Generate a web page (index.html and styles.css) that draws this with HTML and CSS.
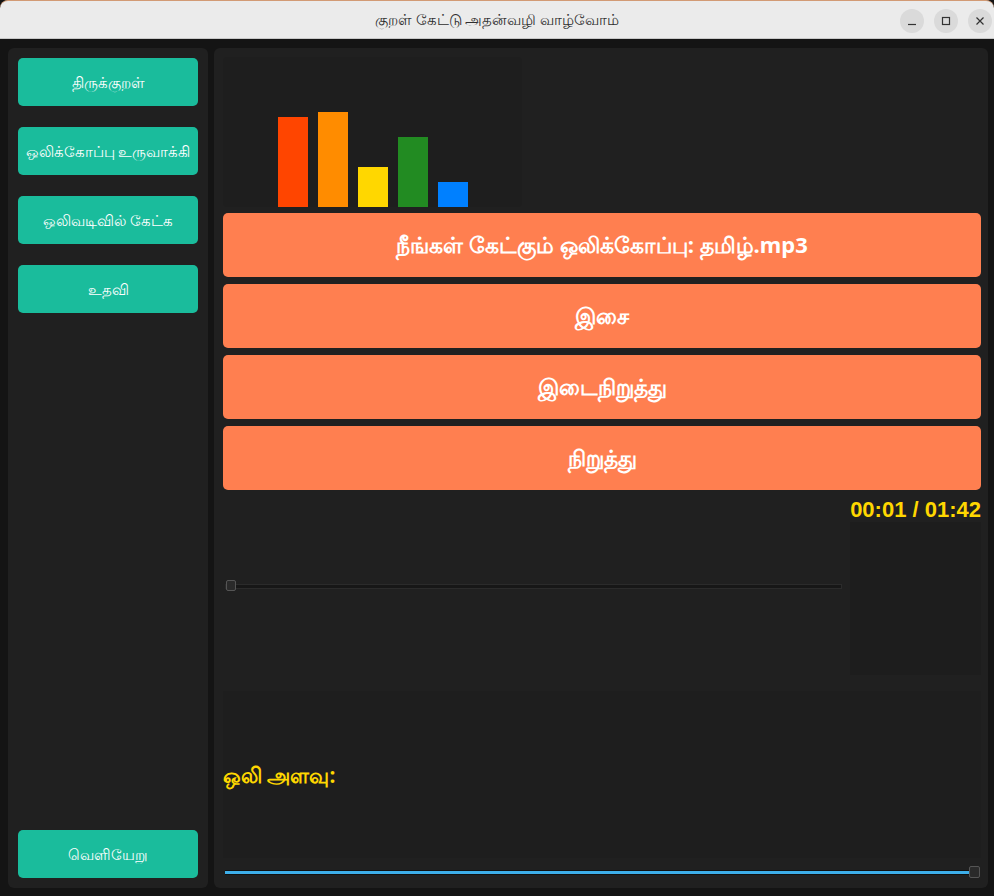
FILE: index.html
```html
<!DOCTYPE html>
<html lang="ta">
<head>
<meta charset="utf-8">
<title>குறள் கேட்டு அதன்வழி வாழ்வோம்</title>
<link rel="stylesheet" href="styles.css">
</head>
<body>
<div class="window">
  <header class="titlebar">
    <div class="title">குறள் கேட்டு அதன்வழி வாழ்வோம்</div>
    <div class="controls">
      <span class="ctl"><svg width="10" height="10" viewBox="0 0 10 10"><path d="M1 8.5h8" stroke="#333" stroke-width="1.2"/></svg></span>
      <span class="ctl"><svg width="10" height="10" viewBox="0 0 10 10"><rect x="1.5" y="1.5" width="7" height="7" fill="none" stroke="#333" stroke-width="1.2"/></svg></span>
      <span class="ctl"><svg width="10" height="10" viewBox="0 0 10 10"><path d="M1.5 1.5l7 7M8.5 1.5l-7 7" stroke="#333" stroke-width="1.2"/></svg></span>
    </div>
  </header>
  <div class="app">
    <nav class="sidebar">
      <button class="nav-btn">திருக்குறள்</button>
      <button class="nav-btn">ஒலிக்கோப்பு உருவாக்கி</button>
      <button class="nav-btn">ஒலிவடிவில் கேட்க</button>
      <button class="nav-btn">உதவி</button>
      <button class="nav-btn exit">வெளியேறு</button>
    </nav>
    <main class="main">
      <div class="visualizer">
        <div class="bar" style="height:90px;background:#ff4500"></div>
        <div class="bar" style="height:95px;background:#ff8c00"></div>
        <div class="bar" style="height:40px;background:#ffd700"></div>
        <div class="bar" style="height:70px;background:#228b22"></div>
        <div class="bar" style="height:25px;background:#0080ff"></div>
      </div>
      <button class="action">நீங்கள் கேட்கும் ஒலிக்கோப்பு: தமிழ்.mp3</button>
      <button class="action">இசை</button>
      <button class="action">இடைநிறுத்து</button>
      <button class="action">நிறுத்து</button>
      <div class="progress">
        <div class="progress-slider">
          <div class="track"><span class="handle"></span></div>
        </div>
        <div class="progress-side">
          <div class="time">00:01 / 01:42</div>
          <div class="side-box"></div>
        </div>
      </div>
      <div class="volume-label">ஒலி அளவு:</div>
      <div class="volume">
        <div class="vtrack"></div>
        <span class="vhandle"></span>
      </div>
    </main>
  </div>
</div>
</body>
</html>
```

FILE: styles.css
```css
* { box-sizing: border-box; }
html, body { margin: 0; padding: 0; }
body {
  background: #141414;
  font-family: "Noto Sans", "Liberation Sans", sans-serif;
  width: 994px;
  height: 896px;
  overflow: hidden;
}
.window {
  height: 896px;
  display: flex;
  flex-direction: column;
}
.titlebar {
  height: 39px;
  flex: none;
  background: #ebebeb;
  border-top: 1px solid #d29a74;
  border-bottom: 1px solid #c8c8c8;
  border-radius: 8px 8px 0 0;
  display: flex;
  align-items: center;
  justify-content: center;
  position: relative;
}
.title {
  font-size: 14.5px;
  color: #2e2e2e;
}
.controls {
  position: absolute;
  right: 2px;
  top: 8px;
  display: flex;
  gap: 10px;
}
.ctl {
  width: 24px;
  height: 24px;
  border-radius: 50%;
  background: #dadada;
  display: flex;
  align-items: center;
  justify-content: center;
}
.app {
  flex: 1;
  display: flex;
  gap: 6px;
  padding: 9px 6px 8px 8px;
}
.sidebar {
  width: 200px;
  flex: none;
  background: #202020;
  border-radius: 6px;
  padding: 10px;
  display: flex;
  flex-direction: column;
  gap: 21px;
}
.nav-btn {
  height: 48px;
  flex: none;
  border: none;
  border-radius: 5px;
  background: #1abc9c;
  color: #ffffff;
  font-family: inherit;
  font-size: 14.5px;
  padding: 0;
}
.nav-btn.exit { margin-top: auto; }
.main {
  flex: 1;
  background: #202020;
  border-radius: 6px;
  padding: 9px 7px 2px 9px;
  display: flex;
  flex-direction: column;
}
.visualizer {
  width: 299px;
  height: 150px;
  background: #1e1e1e;
  border-radius: 4px;
  display: flex;
  align-items: flex-end;
  gap: 10px;
  padding-left: 55px;
  margin-bottom: 6px;
}
.bar { width: 30px; }
.action {
  height: 64px;
  flex: none;
  border: none;
  border-radius: 5px;
  background: #ff7f50;
  color: #ffffff;
  font-family: inherit;
  font-size: 22px;
  font-weight: bold;
  padding: 0;
  margin-bottom: 7px;
}
.action:nth-of-type(4) { margin-bottom: 0; }
.progress {
  display: flex;
  height: 185px;
  gap: 8px;
  margin-top: 6px;
}
.progress-slider {
  flex: 1;
  display: flex;
  align-items: center;
  padding-bottom: 4px;
}
.track {
  position: relative;
  width: 100%;
  height: 5px;
  background: #171717;
  border: 1px solid #2b2b2b;
  margin-left: 2px;
}
.handle {
  position: absolute;
  left: 0;
  top: -5px;
  width: 10px;
  height: 11px;
  border-radius: 2px;
  background: #2a2a2a;
  border: 1px solid #555555;
}
.progress-side {
  width: 131px;
  display: flex;
  flex-direction: column;
}
.time {
  font-family: "Liberation Sans", Arial, sans-serif;
  font-weight: bold;
  font-size: 22px;
  color: #ffd700;
  text-align: right;
  height: 26px;
  line-height: 28px;
  white-space: nowrap;
}
.side-box {
  height: 153px;
  background: #1d1d1d;
}
.volume-label {
  flex: 1;
  display: flex;
  align-items: center;
  font-weight: bold;
  font-size: 21px;
  color: #ffd700;
  background: #1e1e1e;
  margin-top: 10px;
  padding-top: 2px;
}
.volume {
  position: relative;
  height: 28px;
  display: flex;
  align-items: center;
  padding: 0 2px 0 2px;
}
.vtrack {
  flex: 1;
  height: 5px;
  background: #3daee9;
  border-top: 1px solid #111;
  border-bottom: 1px solid #111;
}
.vhandle {
  position: absolute;
  right: 1px;
  top: 8px;
  width: 11px;
  height: 12px;
  border-radius: 2px;
  background: #2a2a2a;
  border: 1px solid #555555;
}
```
